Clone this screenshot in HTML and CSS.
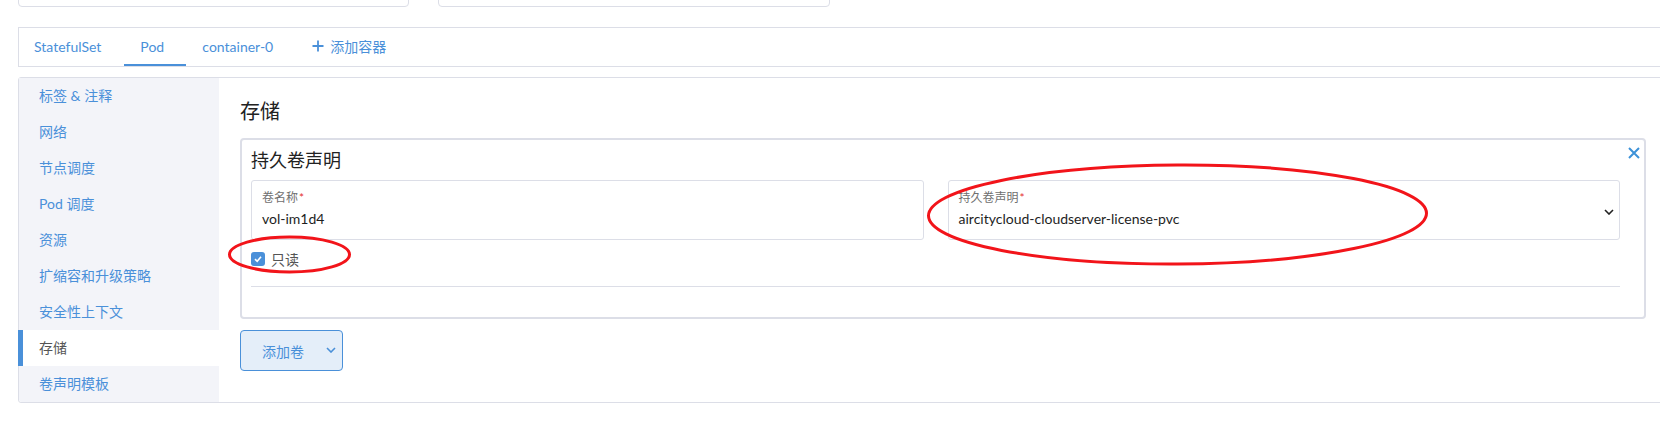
FILE: index.html
```html
<!DOCTYPE html>
<html lang="zh">
<head>
<meta charset="utf-8">
<title>存储</title>
<link rel="stylesheet" href="styles.css">
</head>
<body>
<div class="page">
  <div class="top-fields">
    <div class="field-stub stub-1"></div>
    <div class="field-stub stub-2"></div>
  </div>

  <nav class="tabbar">
    <a class="tab tab-first">StatefulSet</a>
    <a class="tab active">Pod</a>
    <a class="tab">container-0</a>
    <a class="tab tab-add">
      <svg class="plus" width="12" height="12" viewBox="0 0 12 12"><path d="M6 0.5V11.5M0.5 6H11.5" stroke="currentColor" stroke-width="1.8" fill="none"/></svg>
      添加容器
    </a>
  </nav>

  <div class="panel">
    <ul class="side">
      <li>标签 &amp; 注释</li>
      <li>网络</li>
      <li>节点调度</li>
      <li>Pod 调度</li>
      <li>资源</li>
      <li>扩缩容和升级策略</li>
      <li>安全性上下文</li>
      <li class="selected">存储</li>
      <li>卷声明模板</li>
    </ul>

    <main class="main">
      <h2 class="title">存储</h2>

      <section class="card">
        <button class="close" type="button" aria-label="close">
          <svg width="12" height="12" viewBox="0 0 12 12"><path d="M1 1L11 11M11 1L1 11" stroke="currentColor" stroke-width="2" fill="none"/></svg>
        </button>
        <h3 class="card-title">持久卷声明</h3>
        <div class="row">
          <div class="field">
            <div class="label">卷名称<span class="req">*</span></div>
            <div class="value">vol-im1d4</div>
          </div>
          <div class="field field-select">
            <div class="field-body">
              <div class="label">持久卷声明<span class="req">*</span></div>
              <div class="value">aircitycloud-cloudserver-license-pvc</div>
            </div>
            <svg class="chev" width="10" height="6" viewBox="0 0 10 6"><path d="M1 1L5 5L9 1" stroke="#222" stroke-width="1.6" fill="none"/></svg>
          </div>
        </div>
        <label class="check">
          <span class="box"><svg width="10" height="10" viewBox="0 0 10 10"><path d="M2 5.2L4.2 7.3L8 2.8" stroke="#fff" stroke-width="1.6" fill="none"/></svg></span>
          只读
        </label>
        <div class="divider"></div>
      </section>

      <button class="add-btn" type="button">
        <span>添加卷</span>
        <svg width="10" height="6" viewBox="0 0 10 6"><path d="M1 1L5 5L9 1" stroke="currentColor" stroke-width="1.6" fill="none"/></svg>
      </button>
    </main>
  </div>
</div>

<svg class="annot" width="1660" height="439" viewBox="0 0 1660 439">
  <ellipse cx="289.5" cy="254.5" rx="60" ry="17.5" fill="none" stroke="#f2141a" stroke-width="3"/>
  <ellipse cx="1177.5" cy="214.5" rx="249" ry="49.5" fill="none" stroke="#f2141a" stroke-width="3" transform="rotate(-0.3 1177.5 214.5)"/>
</svg>
</body>
</html>
```

FILE: styles.css
```css
* { box-sizing: border-box; }

html, body {
  margin: 0;
  padding: 0;
  overflow: hidden;
  background: #fff;
}

body {
  position: relative;
  width: 1660px;
  height: 439px;
  font-family: Lato, "Noto Sans CJK SC", sans-serif;
  font-size: 14px;
  color: #222;
}

.page {
  margin-left: 18px;
  width: 1649px;
}

/* cut-off fields at the very top */
.top-fields {
  display: flex;
  gap: 29px;
  margin-top: -34px;
}
.field-stub {
  height: 41px;
  border: 1px solid #dcdee7;
  border-radius: 4px;
  background: #fff;
}
.stub-1 { width: 391px; }
.stub-2 { width: 392px; }

/* tabs */
.tabbar {
  display: flex;
  margin-top: 20px;
  height: 40px;
  border: 1px solid #dcdee7;
  border-right: none;
  background: #fff;
}
.tab {
  display: flex;
  align-items: center;
  height: 38px;
  padding: 0 16px;
  border-bottom: 2px solid transparent;
  color: #4a90d9;
  font-size: 14px;
  white-space: nowrap;
}
.tab-first { padding-left: 15px; margin-right: 7px; }
.tab.active {
  min-width: 62px;
  border-bottom-color: #4a90d9;
}
.tab-add { margin-left: 7px; gap: 6px; }
.plus { display: block; }

/* panel */
.panel {
  display: flex;
  margin-top: 10px;
  border: 1px solid #dcdee7;
  border-radius: 3px;
}

.side {
  list-style: none;
  margin: 0;
  padding: 0;
  width: 200px;
  flex: none;
  background: #f3f4f9;
  border-bottom-left-radius: 3px;
}
.side li {
  height: 36px;
  line-height: 36px;
  padding-left: 16px;
  margin-left: -1px;
  border-left: 5px solid transparent;
  color: #4a90d9;
  font-size: 14px;
  white-space: nowrap;
}
.side li.selected {
  background: #fff;
  border-left-color: #4a90d9;
  color: #555;
}

.main {
  flex: 1;
  padding: 20px 20px 0 21px;
}
.title {
  margin: 0 0 14px;
  font-size: 20px;
  line-height: 26px;
  font-weight: normal;
  color: #222;
}

/* card */
.card {
  position: relative;
  border: 2px solid #dcdee7;
  border-radius: 4px;
  padding: 8px 24px 30px 9px;
}
.close {
  position: absolute;
  top: 7px;
  right: 4px;
  border: none;
  background: none;
  padding: 0;
  color: #3d92d8;
  line-height: 0;
}
.card-title {
  margin: 0 0 8px;
  font-size: 18px;
  line-height: 24px;
  font-weight: normal;
  color: #222;
}
.row {
  display: grid;
  grid-template-columns: 1fr 1fr;
  gap: 24px;
}
.field {
  height: 60px;
  border: 1px solid #dcdee7;
  border-radius: 3px;
  padding: 8px 10px 10px;
}
.field-select {
  display: flex;
  align-items: center;
  justify-content: space-between;
  padding-right: 5px;
}
.field-select .field-body { align-self: stretch; }
.chev { display: block; margin-top: 5px; }
.label {
  font-size: 12px;
  line-height: 18px;
  color: #6f6f6f;
}
.req { color: #e5312f; margin-left: 1px; }
.value {
  margin-top: 2px;
  font-size: 14px;
  line-height: 20px;
  color: #1e1e1e;
}

.check {
  display: flex;
  align-items: center;
  gap: 6px;
  height: 18px;
  margin-top: 10px;
  font-size: 14px;
  color: #555;
}
.box {
  display: flex;
  align-items: center;
  justify-content: center;
  width: 14px;
  height: 14px;
  border-radius: 3px;
  background: #4a90d9;
}
.box svg { display: block; }

.divider {
  margin-top: 18px;
  height: 1px;
  background: #dcdee7;
}

/* add button */
.add-btn {
  display: flex;
  align-items: center;
  margin-top: 11px;
  width: 103px;
  height: 41px;
  padding: 0 0 0 21px;
  border: 1px solid #4a90d9;
  border-radius: 4px;
  background: #e4eef9;
  color: #4a90d9;
  font-family: Lato, "Noto Sans CJK SC", sans-serif;
  font-size: 14px;
}
.add-btn span { width: 64px; text-align: left; }
.add-btn svg { display: block; margin-top: -2px; }

/* red annotation marks drawn over the screenshot */
.annot {
  position: absolute;
  top: 0;
  left: 0;
  pointer-events: none;
}
```
